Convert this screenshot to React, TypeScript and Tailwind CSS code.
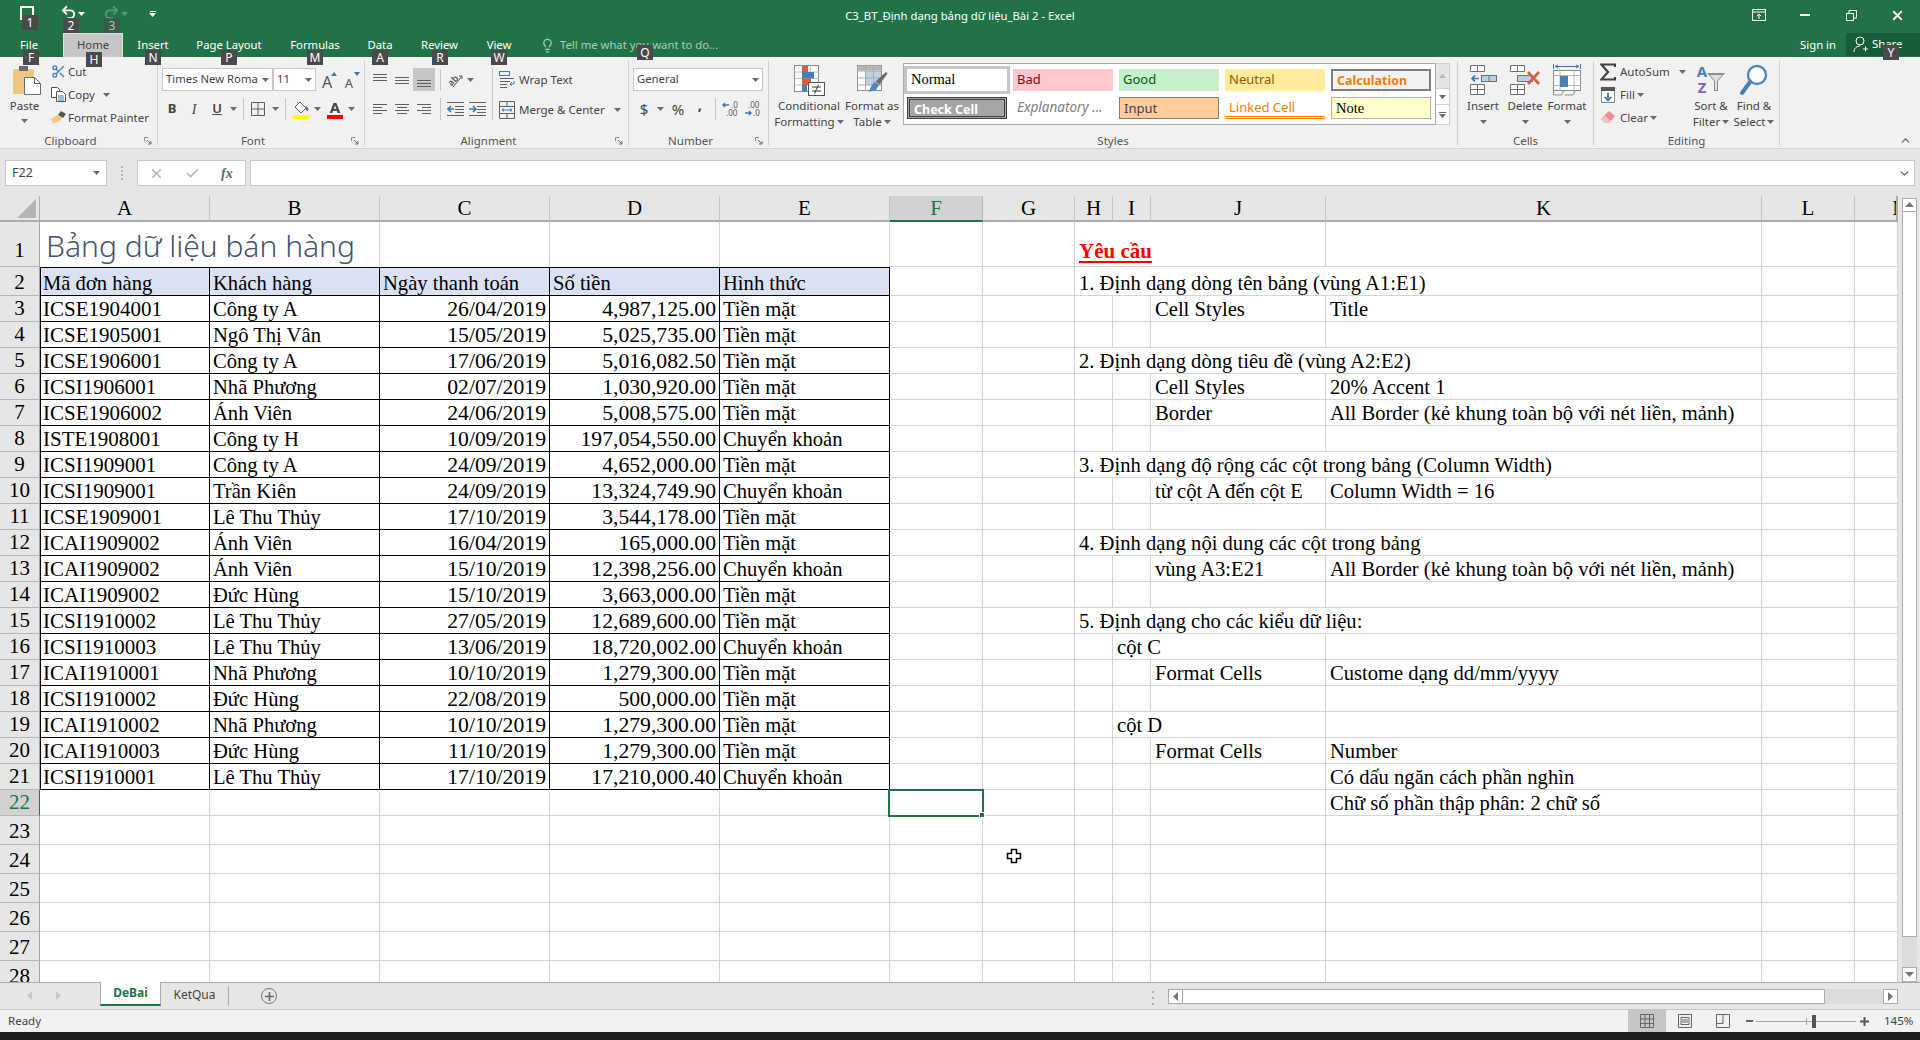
import React from "react";
import { Undo2, Redo2, Lightbulb, Scissors, ChevronUp, ChevronDown, X, Check } from "lucide-react";

const Caret = ({ c = "#6a6a6a", className = "" }: { c?: string; className?: string }) => (
  <svg width="7" height="4" viewBox="0 0 7 4" className={`shrink-0 ${className}`}><path d="M0 0h7L3.5 4z" fill={c} /></svg>
);

const Key = ({ children, className = "" }: { children: React.ReactNode; className?: string }) => (
  <div className={`absolute z-20 w-[16px] h-[15px] bg-[#4a4a4a] text-white text-[12px] leading-[15px] text-center ${className}`}>{children}</div>
);

const Launcher = () => (
  <svg width="8" height="8" viewBox="0 0 8 8" className="absolute right-[5px] top-[76px]">
    <path d="M.5 4V.5H4M.5.5V.5" stroke="#8a8a8a" fill="none" />
    <path d="M3 3l4 4M7 4v3H4" stroke="#6a6a6a" fill="none" />
  </svg>
);

function Group({ w, label, launcher, children }: { w: string; label: string; launcher?: boolean; children: React.ReactNode }) {
  return (
    <div className={`relative h-[84px] shrink-0 border-r border-[#cfcfcf] ${w}`}>
      <div className="h-[72px] flex">{children}</div>
      <div className={`h-[16px] leading-[16px] text-[11.5px] text-center text-[#555] ${launcher ? "pr-[16px]" : ""}`}>{label}</div>
      {launcher && <Launcher />}
    </div>
  );
}

const Small = ({ icon, text, caret, box = "w-[19px]", tw = "ml-0" }: { icon: React.ReactNode; text: string; caret?: React.ReactNode; box?: string; tw?: string }) => (
  <div className="h-[23px] flex items-center whitespace-nowrap text-[11.5px] text-[#444]">
    <div className={`${box} flex justify-center shrink-0`}>{icon}</div>
    <span className={tw}>{text}</span>
    {caret}
  </div>
);

const Big = ({ w, icon, l1, l2, caret2, caret1 }: { w: string; icon: React.ReactNode; l1: string; l2?: string; caret2?: boolean; caret1?: boolean }) => (
  <div className={`${w} shrink-0 flex flex-col items-center text-[11.5px] leading-[16px] text-[#444] whitespace-nowrap`}>
    <div className="h-[30px] mt-[4px] flex items-center justify-center">{icon}</div>
    <div className="mt-[3px]">{l1}</div>
    {l2 ? (
      <div className="flex items-center gap-[2px]">{l2}{caret2 && <Caret />}</div>
    ) : (
      caret1 && <div className="mt-[6px]"><Caret /></div>
    )}
  </div>
);

const Box = ({ children, w = "w-[22px]", className = "" }: { children?: React.ReactNode; w?: string; className?: string }) => (
  <div className={`${w} h-[22px] shrink-0 flex items-center justify-center ${className}`}>{children}</div>
);

const Sep = ({ className = "" }: { className?: string }) => <div className={`w-px h-[22px] bg-[#c6c6c6] shrink-0 ${className}`} />;

const HL = ({ rows }: { rows: [number, number, number][] }) => (
  <svg width="16" height="16" viewBox="0 0 16 16">
    {rows.map(([a, b, y], i) => <path key={i} d={`M${a} ${y}.5H${b}`} stroke="#5f5f5f" />)}
  </svg>
);

const Indent = ({ inc }: { inc?: boolean }) => (
  <svg width="17" height="14" viewBox="0 0 17 14">
    {[0, 13].map((y) => <path key={y} d={`M0 ${y}.5H17`} stroke="#5f5f5f" />)}
    {[4, 7, 10].map((y) => <path key={y} d={`M8 ${y}.5H17`} stroke="#5f5f5f" />)}
    <path d={inc ? "M0 7h6M4 4l3 3-3 3" : "M7 7H1M4 4L1 7l3 3"} stroke="#3f78b5" strokeWidth="1.6" fill="none" />
  </svg>
);

const PasteIcon = () => (
  <svg width="29" height="29" viewBox="0 0 29 29">
    <rect x="0" y="3" width="21" height="25" rx="1.5" fill="#edc87e" />
    <rect x="6" y="0" width="9" height="5" fill="#6b6b6b" />
    <path d="M11.5 11.5h10l6 6v11h-16z" fill="#fff" stroke="#6a6a6a" />
    <path d="M21.5 11.5v6h6" fill="none" stroke="#6a6a6a" />
  </svg>
);
const CopyIcon = () => (
  <svg width="15" height="15" viewBox="0 0 15 15" fill="#fff" stroke="#555">
    <path d="M.5.5h6l2 2v8h-8z" />
    <path d="M5.5 4.5h6l3 3v7h-9z" />
    <path d="M7 9h6M7 11h6M7 13h6" stroke="#3f78b5" />
  </svg>
);
const BrushIcon = () => (
  <svg width="17" height="15" viewBox="0 0 17 15">
    <path d="M11 1l5 3-3 4-5-3z" fill="#555" />
    <path d="M7 5l5 3-2 3-8 3 1-3-3-1z" fill="#edc87e" />
  </svg>
);
const BorderIcon = () => (
  <svg width="14" height="14" viewBox="0 0 14 14" fill="none" stroke="#5f5f5f"><path d="M.5.5h13v13H.5zM7 .5v13M.5 7h13" /></svg>
);
const FillIcon = () => (
  <svg width="17" height="19" viewBox="0 0 17 19">
    <path d="M2 7l5-5 6 6-5 5z" fill="#fff" stroke="#5f5f5f" />
    <path d="M4 2l2 2" stroke="#5f5f5f" />
    <path d="M13 6c2 1 3 3 2 5-2 0-3-2-2-5z" fill="#3f78b5" />
    <rect x="0" y="15" width="16" height="4" fill="#ffff00" />
  </svg>
);
const FontColor = () => (
  <svg width="16" height="19" viewBox="0 0 16 19">
    <text x="8" y="13" textAnchor="middle" fontSize="15" fontWeight="700" fontFamily="'Noto Sans',sans-serif" fill="#444">A</text>
    <rect x="0" y="15" width="16" height="4" fill="#ff0000" />
  </svg>
);
const GrowFont = ({ up }: { up?: boolean }) => (
  <svg width="20" height="20" viewBox="0 0 20 20">
    <text x="7" y="18" textAnchor="middle" fontSize={up ? 16 : 13} fontFamily="'Noto Sans',sans-serif" fill="#555">A</text>
    <path d={up ? "M11 6l3-4 3 4z" : "M12 2l3 4 3-4z"} fill="#3f78b5" />
  </svg>
);
const Orient = () => (
  <svg width="18" height="18" viewBox="0 0 18 18">
    <text x="3" y="14" fontSize="9" fontWeight="600" transform="rotate(-45 6 12)" fontFamily="'Noto Sans',sans-serif" fill="#555">ab</text>
    <path d="M7 16L16 5M13 5h3v3" stroke="#555" fill="none" />
  </svg>
);
const WrapIcon = () => (
  <svg width="16" height="18" viewBox="0 0 16 18" fill="none">
    <rect x="0.5" y="0.5" width="10" height="4" stroke="#3f78b5" />
    <path d="M1 7.5h14M1 10.5h10M1 13.5h7M1 16.5h7" stroke="#5f5f5f" />
    <path d="M15 10v3h-4M13 11l-2 2 2 2" stroke="#3f78b5" />
  </svg>
);
const MergeIcon = () => (
  <svg width="16" height="18" viewBox="0 0 16 18" fill="none" stroke="#5f5f5f">
    <path d="M.5.5h15v17H.5zM.5 5.5h15M.5 12.5h15M8 .5v5M8 12.5v5" />
    <path d="M3 9h10M5 7.5L3 9l2 1.5M11 7.5L13 9l-2 1.5" stroke="#3f78b5" />
  </svg>
);
const CondIcon = () => (
  <svg width="31" height="31" viewBox="0 0 31 31">
    <rect x="0.5" y="0.5" width="24" height="26" fill="#fff" stroke="#8c8c8c" />
    <path d="M8.5 .5v26M16.5 .5v26M.5 7h24M.5 13.5h24M.5 20h24" stroke="#c0c0c0" />
    <rect x="8" y="1" width="6" height="6" fill="#d9603b" />
    <rect x="8" y="7" width="12" height="6.5" fill="#4a7fb5" />
    <rect x="8" y="13.5" width="9" height="6.5" fill="#d9603b" />
    <rect x="8" y="20" width="5" height="6.5" fill="#4a7fb5" />
    <rect x="14.5" y="17.5" width="16" height="13" fill="#fff" stroke="#555" />
    <path d="M18 22h9M18 26h9M24.5 19.5l-4 9" stroke="#333" />
  </svg>
);
const TableIcon = () => (
  <svg width="31" height="31" viewBox="0 0 31 31">
    <rect x="0.5" y="0.5" width="24" height="25" fill="#fff" stroke="#8c8c8c" />
    <rect x="0.5" y="0.5" width="24" height="5" fill="#b5b5b5" />
    <rect x="8" y="6" width="16" height="14" fill="#bcd0e6" />
    <path d="M8.5 .5v25M16.5 .5v25M.5 6h24M.5 13h24M.5 20h24" stroke="#aaa" />
    <path d="M29 7l1.5 1.5-8 11-4-3z" fill="#6b6b6b" />
    <path d="M18 17l4 3-3 5-7 2c1-4 3-8 6-10z" fill="#4a87c5" />
  </svg>
);
const CellGrid = ({ x, y }: { x: number; y: number }) => (
  <g transform={`translate(${x} ${y})`} fill="#fff" stroke="#6f6f6f">
    <path d="M.5.5h14v10H.5zM7.5.5v10M.5 5.5h14" />
  </g>
);
const InsertIcon = () => (
  <svg width="27" height="30" viewBox="0 0 27 30">
    <path d="M.5.5h14v6H.5zM7.5.5v6" fill="#fff" stroke="#6f6f6f" />
    <rect x="11.5" y="10.5" width="15" height="6" fill="#b9d0e8" stroke="#6f6f6f" />
    <path d="M19 10.5v6" stroke="#6f6f6f" />
    <path d="M9 13.5H2M5 10.5l-3 3 3 3" stroke="#3f78b5" strokeWidth="1.7" fill="none" />
    <CellGrid x={0} y={19} />
  </svg>
);
const DeleteIcon = () => (
  <svg width="31" height="30" viewBox="0 0 31 30">
    <path d="M.5.5h14v6H.5zM7.5.5v6" fill="#fff" stroke="#6f6f6f" />
    <rect x="7.5" y="10.5" width="15" height="6" fill="#b9d0e8" stroke="#6f6f6f" />
    <path d="M18 7l11 12M29 7L18 19" stroke="#d9603b" strokeWidth="2.6" />
    <CellGrid x={0} y={19} />
  </svg>
);
const FormatIcon = () => (
  <svg width="29" height="32" viewBox="0 0 29 32">
    <path d="M.5 0v5M27.5 0v5" stroke="#3f78b5" />
    <path d="M2 2.5h24M5 1L2 2.5 5 4M23 1l3 1.5L23 4" stroke="#3f78b5" fill="none" />
    <rect x="0.5" y="6.5" width="27" height="20" fill="#fff" stroke="#8c8c8c" />
    <path d="M7 6.5v20M21 6.5v20M.5 11.5h27M.5 21.5h27" stroke="#b5b5b5" />
    <rect x="7" y="12" width="8" height="11" fill="#4a7fb5" />
    <path d="M.5 27v4h8l2-4M12 31h8l2-4" stroke="#8c8c8c" fill="none" />
  </svg>
);
const SigmaIcon = () => (
  <svg width="16" height="18" viewBox="0 0 16 18"><path d="M15 4V1.5H1.5L8 9l-6.5 7.5H15V14" fill="none" stroke="#444" strokeWidth="2.2" /></svg>
);
const FillDown = () => (
  <svg width="14" height="16" viewBox="0 0 14 16">
    <rect x="0.5" y="0.5" width="13" height="15" fill="#fff" stroke="#8c8c8c" />
    <rect x="0" y="0" width="14" height="4" fill="#555" />
    <path d="M7 5.5v8M3.5 10L7 13.5 10.5 10" stroke="#3f78b5" strokeWidth="1.7" fill="none" />
  </svg>
);
const Eraser = () => (
  <svg width="16" height="15" viewBox="0 0 16 15">
    <path d="M9 1l6 5-6 7H5L1 9z" fill="#ec8a96" />
    <path d="M1 9l4 4h4l2-2-6-5z" fill="#f4c0c6" />
  </svg>
);
const SortIcon = () => (
  <svg width="30" height="32" viewBox="0 0 30 32">
    <text x="6" y="13" textAnchor="middle" fontSize="15" fontWeight="700" fontFamily="'Noto Sans',sans-serif" fill="#4a7fb5">A</text>
    <text x="6" y="29" textAnchor="middle" fontSize="15" fontWeight="700" fontFamily="'Noto Sans',sans-serif" fill="#8e5ab5">Z</text>
    <path d="M11 9h18l-7 8v10h-4V17z" fill="#8c8c8c" />
    <path d="M19 17v9h2v-9l5-6H14z" fill="#e0e0e0" />
  </svg>
);
const FindIcon = () => (
  <svg width="28" height="32" viewBox="0 0 28 32" fill="none">
    <circle cx="17" cy="11" r="9" stroke="#4a87c5" strokeWidth="2.4" fill="#fff" />
    <path d="M10 18L2 29" stroke="#4a7fb5" strokeWidth="4" strokeLinecap="round" />
  </svg>
);

const Style = ({ className, children }: { className: string; children: React.ReactNode }) => (
  <div className={`h-[22px] leading-[20px] px-[4px] whitespace-nowrap overflow-hidden ${className}`}>{children}</div>
);

const DropBox = ({ w, text, children }: { w: string; text: string; children?: React.ReactNode }) => (
  <div className={`${w} h-[23px] shrink-0 bg-white border border-[#c6c6c6] flex items-center justify-between px-[3px] text-[11.3px] text-[#444] whitespace-nowrap overflow-hidden`}>
    <span>{text}</span>
    {children ?? <Caret />}
  </div>
);

const data = [
  ["ICSE1904001", "Công ty A", "26/04/2019", "4,987,125.00", "Tiền mặt"],
  ["ICSE1905001", "Ngô Thị Vân", "15/05/2019", "5,025,735.00", "Tiền mặt"],
  ["ICSE1906001", "Công ty A", "17/06/2019", "5,016,082.50", "Tiền mặt"],
  ["ICSI1906001", "Nhã Phương", "02/07/2019", "1,030,920.00", "Tiền mặt"],
  ["ICSE1906002", "Ánh Viên", "24/06/2019", "5,008,575.00", "Tiền mặt"],
  ["ISTE1908001", "Công ty H", "10/09/2019", "197,054,550.00", "Chuyển khoản"],
  ["ICSI1909001", "Công ty A", "24/09/2019", "4,652,000.00", "Tiền mặt"],
  ["ICSI1909001", "Trần Kiên", "24/09/2019", "13,324,749.90", "Chuyển khoản"],
  ["ICSE1909001", "Lê Thu Thủy", "17/10/2019", "3,544,178.00", "Tiền mặt"],
  ["ICAI1909002", "Ánh Viên", "16/04/2019", "165,000.00", "Tiền mặt"],
  ["ICAI1909002", "Ánh Viên", "15/10/2019", "12,398,256.00", "Chuyển khoản"],
  ["ICAI1909002", "Đức Hùng", "15/10/2019", "3,663,000.00", "Tiền mặt"],
  ["ICSI1910002", "Lê Thu Thủy", "27/05/2019", "12,689,600.00", "Tiền mặt"],
  ["ICSI1910003", "Lê Thu Thủy", "13/06/2019", "18,720,002.00", "Chuyển khoản"],
  ["ICAI1910001", "Nhã Phương", "10/10/2019", "1,279,300.00", "Tiền mặt"],
  ["ICSI1910002", "Đức Hùng", "22/08/2019", "500,000.00", "Tiền mặt"],
  ["ICAI1910002", "Nhã Phương", "10/10/2019", "1,279,300.00", "Tiền mặt"],
  ["ICAI1910003", "Đức Hùng", "11/10/2019", "1,279,300.00", "Tiền mặt"],
  ["ICSI1910001", "Lê Thu Thủy", "17/10/2019", "17,210,000.40", "Chuyển khoản"],
];

const panel: Record<number, { h?: string; i?: string; j?: string; k?: string }> = {
  2: { h: "1. Định dạng dòng tên bảng (vùng A1:E1)" },
  3: { j: "Cell Styles", k: "Title" },
  5: { h: "2. Định dạng dòng tiêu đề (vùng A2:E2)" },
  6: { j: "Cell Styles", k: "20% Accent 1" },
  7: { j: "Border", k: "All Border (kẻ khung toàn bộ với nét liền, mảnh)" },
  9: { h: "3. Định dạng độ rộng các cột trong bảng (Column Width)" },
  10: { j: "từ cột A đến cột E", k: "Column Width = 16" },
  12: { h: "4. Định dạng nội dung các cột trong bảng" },
  13: { j: "vùng A3:E21", k: "All Border (kẻ khung toàn bộ với nét liền, mảnh)" },
  15: { h: "5. Định dạng cho các kiểu dữ liệu:" },
  16: { i: "cột C" },
  17: { j: "Format Cells", k: "Custome dạng dd/mm/yyyy" },
  19: { i: "cột D" },
  20: { j: "Format Cells", k: "Number" },
  21: { k: "Có dấu ngăn cách phần nghìn" },
  22: { k: "Chữ số phần thập phân: 2 chữ số" },
};

const Cell = ({ className = "border-[#d4d4d4]", children }: { className?: string; children?: React.ReactNode }) => (
  <div className={`border-r border-b flex items-end px-[3px] whitespace-nowrap min-w-0 ${className}`}>{children}</div>
);

function Panel({ r }: { r: number }) {
  const p = panel[r] ?? {};
  if (r === 1)
    return (
      <>
        <Cell className="col-span-3 border-[#d4d4d4] pb-[3px] pl-[4px]">
          <span className="font-bold text-[#ff0000] text-[21px] underline decoration-2 underline-offset-[3px]">Yêu cầu</span>
        </Cell>
        <Cell /><Cell /><Cell />
      </>
    );
  if (p.h)
    return (
      <>
        <Cell className="col-span-4 border-[#d4d4d4] pl-[4px]"><span>{p.h}</span></Cell>
        <Cell /><Cell />
      </>
    );
  if (p.i)
    return (
      <>
        <Cell />
        <Cell className="col-span-2 border-[#d4d4d4] pl-[4px]"><span>{p.i}</span></Cell>
        <Cell /><Cell /><Cell />
      </>
    );
  return (
    <>
      <Cell /><Cell />
      <Cell className="border-[#d4d4d4] pl-[4px]">{p.j && <span>{p.j}</span>}</Cell>
      <Cell className="border-[#d4d4d4] pl-[4px]">{p.k && <span>{p.k}</span>}</Cell>
      <Cell /><Cell />
    </>
  );
}

function RowNum({ r }: { r: number }) {
  const sel = r === 22;
  return (
    <div className={`flex items-end justify-center text-[21px] border-b border-r ${r === 1 ? "pb-[4px]" : "pb-[1px]"} ${sel ? "bg-[#d2d2d2] border-r-[#217346] border-b-[#b5b5b5] text-[#217346]" : "bg-[#e6e6e6] border-b-[#b5b5b5] border-r-[#a5a5a5]"}`}>{r}</div>
  );
}

function Row({ r }: { r: number }) {
  const num = <RowNum r={r} />;
  const tb = "border-black";
  if (r === 1)
    return (
      <>
        {num}
        <div className="col-span-2 border-r border-[#d4d4d4] flex items-end pl-[6px] pb-[1px] whitespace-nowrap font-['Noto_Sans',sans-serif] font-light text-[30px] leading-[40px] text-[#44546a]">Bảng dữ liệu bán hàng</div>
        <div className="border-r border-[#d4d4d4]" />
        <div className="border-r border-[#d4d4d4]" />
        <div className="border-r border-[#d4d4d4]" />
        <Cell /><Cell />
        <Panel r={1} />
      </>
    );
  if (r === 2)
    return (
      <>
        {num}
        {["Mã đơn hàng", "Khách hàng", "Ngày thanh toán", "Số tiền", "Hình thức"].map((t, i) => (
          <Cell key={t} className={`border-t border-black bg-[#d9e1f2] ${i === 0 ? "border-l pl-[2px]" : ""}`}><span>{t}</span></Cell>
        ))}
        <Cell /><Cell />
        <Panel r={2} />
      </>
    );
  const row = data[r - 3];
  return (
    <>
      {num}
      {row
        ? row.map((t, i) => (
            <Cell
              key={i}
              className={`${tb} ${i === 0 ? "border-l pl-[2px] text-[21px]" : ""} ${i === 2 || i === 3 ? "justify-end text-[21.700px]" : ""}`}
            >
              <span>{t}</span>
            </Cell>
          ))
        : [0, 1, 2, 3, 4].map((i) => <Cell key={i} />)}
      {r === 22 ? (
        <Cell className="relative border-[#d4d4d4]">
          <div className="absolute -left-[2px] -top-[1px] w-[96px] h-[28px] border-2 border-[#217346] z-10">
            <div className="absolute -right-[3px] -bottom-[3px] w-[6px] h-[6px] bg-[#217346] border border-white" />
          </div>
        </Cell>
      ) : (
        <Cell />
      )}
      <Cell />
      <Panel r={r} />
    </>
  );
}

const cols = ["A", "B", "C", "D", "E", "F", "G", "H", "I", "J", "K", "L"];

export default function App() {
  const rows = Array.from({ length: 28 }, (_, i) => i + 1);
  return (
    <div className="w-[1920px] h-[1040px] overflow-hidden flex flex-col bg-[#e6e6e6] font-['Noto_Sans',sans-serif] text-[#444]">
      {/* Title bar */}
      <div className="h-[33px] shrink-0 bg-[#217346] grid grid-cols-[1fr_auto_1fr] items-center text-white">
        <div className="flex items-center h-full">
          <div className="relative ml-[20px] w-[14px] h-[14px] -mt-[8px] border-2 border-white"><Key className="left-[0px] top-[7px]">1</Key></div>
          <div className="relative ml-[26px] -mt-[8px]"><Undo2 size={17} strokeWidth={2.6} color="#fff" /><Key className="left-[3px] top-[14px]">2</Key></div>
          <Caret c="#fff" className="ml-[1px] -mt-[6px]" />
          <div className="relative ml-[18px] -mt-[8px]"><Redo2 size={17} strokeWidth={2.6} color="#5b9a78" /><Key className="left-[1px] top-[14px] opacity-60">3</Key></div>
          <Caret c="#5b9a78" className="ml-[1px] -mt-[6px]" />
          <div className="ml-[21px] -mt-[6px] flex flex-col items-center gap-[1px]"><div className="w-[6px] h-px bg-white" /><Caret c="#fff" /></div>
        </div>
        <div className="text-[11.3px]">C3_BT_Định dạng bảng dữ liệu_Bài 2 - Excel</div>
        <div className="flex justify-end items-center h-full">
          <div className="w-[46px] flex justify-center -mt-[3px]">
            <svg width="14" height="12" viewBox="0 0 14 12" fill="none" stroke="#fff"><path d="M.5.5h13v11H.5zM.5 3h13M7 10V5M5 7l2-2 2 2" /></svg>
          </div>
          <div className="w-[46px] flex justify-center -mt-[3px]"><div className="w-[10px] h-[2px] bg-white" /></div>
          <div className="w-[46px] flex justify-center -mt-[3px]">
            <svg width="11" height="11" viewBox="0 0 11 11" fill="none" stroke="#fff"><path d="M.5 3.5h7v7h-7zM3 3V.5h7.5V8H8" /></svg>
          </div>
          <div className="w-[46px] flex justify-center -mt-[3px]"><X size={15} strokeWidth={3} color="#fff" /></div>
        </div>
      </div>

      {/* Tabs */}
      <div className="h-[24px] shrink-0 bg-[#217346] flex items-center text-[11.3px] text-white relative">
        <div className="relative w-[58px] text-center mr-[5px]">File<Key className="left-[23px] top-[13px]">F</Key></div>
        <div className="relative w-[60px] h-full text-center leading-[22px] bg-[#c6c6c6] text-[#444] border-x border-t border-[#e0e0e0]">Home<Key className="left-[22px] top-[18px]">H</Key></div>
        <div className="relative w-[60px] text-center">Insert<Key className="left-[22px] top-[13px]">N</Key></div>
        <div className="relative w-[92px] text-center">Page Layout<Key className="left-[38px] top-[13px]">P</Key></div>
        <div className="relative w-[80px] text-center">Formulas<Key className="left-[32px] top-[13px]">M</Key></div>
        <div className="relative w-[50px] text-center">Data<Key className="left-[17px] top-[13px]">A</Key></div>
        <div className="relative w-[69px] text-center">Review<Key className="left-[27px] top-[13px]">R</Key></div>
        <div className="relative w-[50px] text-center">View<Key className="left-[17px] top-[13px]">W</Key></div>
        <div className="relative ml-[16px] flex items-center gap-[5px] text-[#a8cdb8]">
          <Lightbulb size={15} color="#a8cdb8" />
          <span>Tell me what you want to do...</span>
          <Key className="left-[97px] top-[8px]">Q</Key>
        </div>
        <div className="ml-auto mr-[10px]">Sign in</div>
        <div className="relative w-[74px] h-[23px] self-start bg-[#185c37] flex items-center pl-[7px] gap-[4px]">
          <svg width="15" height="17" viewBox="0 0 15 17" fill="none" stroke="#fff"><circle cx="7" cy="5" r="4" /><path d="M1 16c0-4 3-6 6-6M10 13h5M12.5 10.500v5" /></svg>
          <span>Share</span>
          <Key className="left-[37px] top-[12px]">Y</Key>
        </div>
      </div>

      {/* Ribbon */}
      <div className="relative h-[92px] shrink-0 bg-[#f1f1f1] border-b border-[#d2d2d2] pt-[4px] flex items-start">
        <Group w="w-[158px]" label="Clipboard" launcher>
          <div className="w-[49px] flex flex-col items-center text-[11.5px] leading-[16px]">
            <div className="mt-[5px] ml-[5px]"><PasteIcon /></div>
            <div className="mt-[3px]">Paste</div>
            <Caret className="mt-[5px]" />
          </div>
          <div className="flex flex-col -mt-[1px]">
            <Small icon={<Scissors size={15} color="#3f78b5" />} text="Cut" />
            <Small icon={<CopyIcon />} text="Copy" caret={<Caret className="ml-[8px]" />} />
            <Small icon={<BrushIcon />} text="Format Painter" />
          </div>
        </Group>

        <Group w="w-[207px]" label="Font" launcher>
          <div className="flex flex-col">
            <div className="flex items-center mt-[7px] ml-[4px]">
              <DropBox w="w-[111px]" text="Times New Roma" />
              <DropBox w="w-[43px]" text="11" />
              <Box className="ml-[3px]"><GrowFont up /></Box>
              <Box><GrowFont /></Box>
            </div>
            <div className="flex items-center mt-[7px] ml-[3px]">
              <Box className="font-bold text-[13px]">B</Box>
              <Box className="italic font-['Liberation_Serif',serif] text-[14px]">I</Box>
              <Box className="ml-[1px] underline text-[13px] font-semibold">U</Box>
              <Box w="w-[10px]"><Caret /></Box>
              <Sep className="ml-[5px]" />
              <Box w="w-[18px]" className="ml-[5px]"><BorderIcon /></Box>
              <Box w="w-[10px]" className="ml-[3px]"><Caret /></Box>
              <Sep className="ml-[5px]" />
              <Box w="w-[20px]" className="ml-[5px]"><FillIcon /></Box>
              <Box w="w-[10px]" className="ml-[1px]"><Caret /></Box>
              <Box w="w-[20px]" className="ml-[3px]"><FontColor /></Box>
              <Box w="w-[10px]" className="ml-[1px]"><Caret /></Box>
            </div>
          </div>
        </Group>

        <Group w="w-[264px]" label="Alignment" launcher>
          <div className="w-[127px] flex flex-col">
            <div className="flex items-center mt-[7px] ml-[4px]">
              <Box><HL rows={[[1, 15, 2], [1, 15, 5], [1, 15, 8]]} /></Box>
              <Box><HL rows={[[1, 15, 5], [1, 15, 8], [1, 15, 11]]} /></Box>
              <Box className="h-[23px] bg-[#c6c6c6]"><HL rows={[[1, 15, 8], [1, 15, 11], [1, 15, 14]]} /></Box>
              <Sep className="ml-[5px]" />
              <Box className="ml-[3px]"><Orient /></Box>
              <Box w="w-[8px]"><Caret /></Box>
            </div>
            <div className="flex items-center mt-[7px] ml-[4px]">
              <Box><HL rows={[[1, 15, 3], [1, 10, 6], [1, 15, 9], [1, 10, 12]]} /></Box>
              <Box><HL rows={[[1, 15, 3], [3, 13, 6], [1, 15, 9], [3, 13, 12]]} /></Box>
              <Box><HL rows={[[1, 15, 3], [6, 15, 6], [1, 15, 9], [6, 15, 12]]} /></Box>
              <Sep className="ml-[5px]" />
              <Box className="ml-[3px]"><Indent /></Box>
              <Box><Indent inc /></Box>
            </div>
          </div>
          <div className="w-px h-[52px] mt-[7px] bg-[#c6c6c6]" />
          <div className="flex flex-col ml-[3px] mt-[7px] gap-[7px]">
            <Small icon={<WrapIcon />} text="Wrap Text" box="w-[22px]" tw="ml-[1px]" />
            <Small icon={<MergeIcon />} text="Merge & Center" box="w-[22px]" tw="ml-[1px]" caret={<Caret className="ml-[9px]" />} />
          </div>
        </Group>

        <Group w="w-[140px]" label="Number" launcher>
          <div className="flex flex-col">
            <div className="mt-[7px] ml-[4px]"><DropBox w="w-[130px]" text="General" /></div>
            <div className="flex items-center mt-[7px] ml-[5px] text-[15px]">
              <Box w="w-[20px]">$</Box>
              <Box w="w-[10px]" className="ml-[1px]"><Caret /></Box>
              <Box w="w-[20px]" className="ml-[3px]">%</Box>
              <Box w="w-[20px]" className="ml-[2px] font-bold pb-[10px]">,</Box>
              <Sep className="ml-[5px]" />
              <Box w="w-[20px]" className="ml-[4px]">
                <svg width="17" height="16" viewBox="0 0 17 16" fill="none">
                  <path d="M7 4H1M3 2L1 4l2 2" stroke="#3f78b5" strokeWidth="1.4" />
                  <text x="9" y="7" fontSize="8" fill="#555" fontFamily="'Noto Sans',sans-serif">.0</text>
                  <text x="4" y="15" fontSize="8" fill="#555" fontFamily="'Noto Sans',sans-serif">.00</text>
                </svg>
              </Box>
              <Box w="w-[20px]" className="ml-[2px]">
                <svg width="17" height="16" viewBox="0 0 17 16" fill="none">
                  <text x="4" y="7" fontSize="8" fill="#555" fontFamily="'Noto Sans',sans-serif">.00</text>
                  <path d="M1 12h6M5 10l2 2-2 2" stroke="#3f78b5" strokeWidth="1.4" />
                  <text x="9" y="15" fontSize="8" fill="#555" fontFamily="'Noto Sans',sans-serif">.0</text>
                </svg>
              </Box>
            </div>
          </div>
        </Group>

        <Group w="w-[689px]" label="Styles">
          <Big w="w-[64px] ml-[8px]" icon={<CondIcon />} l1="Conditional" l2="Formatting" caret2 />
          <Big w="w-[62px]" icon={<TableIcon />} l1="Format as" l2="Table" caret2 />
          <div className="mt-[2px] flex">
            <div className="w-[533px] h-[62px] bg-white border border-[#ababab] grid grid-cols-[repeat(5,100px)] grid-rows-[22px_22px] gap-x-[6px] gap-y-[6px] pl-[3px] pt-[5px]">
              <Style className="font-['Liberation_Serif',serif] text-[14.500px] text-black bg-white outline-[3px] outline-[#c6c6c6]">Normal</Style>
              <Style className="text-[13px] bg-[#ffc7ce] text-[#9c0006]">Bad</Style>
              <Style className="text-[13px] bg-[#c6efce] text-[#006100]">Good</Style>
              <Style className="text-[13px] bg-[#ffeb9c] text-[#9c5700]">Neutral</Style>
              <Style className="text-[12.500px] bg-[#f2f2f2] text-[#fa7d00] font-bold border-2 border-[#7f7f7f] leading-[16px] px-[2px]">Calculation</Style>
              <Style className="text-[12.500px] bg-[#a5a5a5] text-white font-bold border-[3px] border-double border-[#3f3f3f] leading-[14px] px-[1px]">Check Cell</Style>
              <Style className="text-[13.500px] italic text-[#7f7f7f]">Explanatory ...</Style>
              <Style className="text-[13px] bg-[#ffcc99] text-[#3f3f76] border border-[#7f7f7f] leading-[19px] px-[3px]">Input</Style>
              <Style className="text-[13px] text-[#fa7d00] border-b-[3px] border-double border-[#fa7d00] leading-[19px]">Linked Cell</Style>
              <Style className="font-['Liberation_Serif',serif] text-[14.500px] text-black bg-[#ffffcc] border border-[#b2b2b2] px-[3px] leading-[19px]">Note</Style>
            </div>
            <div className="w-[14px] h-[62px] flex flex-col">
              <div className="h-[26px] bg-[#e4e4e4] border-y border-r border-[#d0d0d0] flex items-center justify-center"><svg width="7" height="4" viewBox="0 0 7 4"><path d="M0 4h7L3.500 0z" fill="#b5b5b5" /></svg></div>
              <div className="h-[15px] bg-white border-r border-[#d0d0d0] flex items-center justify-center"><Caret /></div>
              <div className="h-[21px] bg-white border-y border-r border-[#d0d0d0] flex flex-col items-center justify-center gap-[1px]"><div className="w-[7px] h-px bg-[#6a6a6a]" /><Caret /></div>
            </div>
          </div>
        </Group>

        <Group w="w-[136px]" label="Cells">
          <Big w="w-[42px] ml-[4px]" icon={<InsertIcon />} l1="Insert" caret1 />
          <Big w="w-[42px]" icon={<DeleteIcon />} l1="Delete" caret1 />
          <Big w="w-[42px]" icon={<FormatIcon />} l1="Format" caret1 />
        </Group>

        <Group w="w-[186px]" label="Editing">
          <div className="w-[89px] ml-[6px] shrink-0 flex flex-col -mt-[1px]">
            <Small box="w-[16px]" tw="ml-[4px]" icon={<SigmaIcon />} text="AutoSum" caret={<Caret className="ml-[9px]" />} />
            <Small box="w-[16px]" tw="ml-[4px]" icon={<FillDown />} text="Fill" caret={<Caret className="ml-[2px]" />} />
            <Small box="w-[16px]" tw="ml-[4px]" icon={<Eraser />} text="Clear" caret={<Caret className="ml-[2px]" />} />
          </div>
          <Big w="w-[44px]" icon={<SortIcon />} l1="Sort &" l2="Filter" caret2 />
          <Big w="w-[42px]" icon={<FindIcon />} l1="Find &" l2="Select" caret2 />
        </Group>

        <ChevronUp size={13} color="#666" strokeWidth={2.5} className="absolute right-[8px] top-[77px]" />
      </div>

      {/* Formula bar */}
      <div className="h-[47px] shrink-0 bg-[#e6e6e6] pt-[11px] flex items-start">
        <div className="ml-[5px] w-[102px] h-[26px] bg-white border border-[#c6c6c6] flex items-center justify-between pl-[6px] pr-[6px] text-[12.5px] text-[#444]">
          <span>F22</span><Caret />
        </div>
        <div className="ml-[14px] w-[2px] h-[14px] mt-[6px] border-l-2 border-dotted border-[#b5b5b5]" />
        <div className="ml-[14px] w-[109px] h-[26px] bg-white border border-[#c6c6c6] flex items-center">
          <X size={15} color="#b5b5b5" strokeWidth={2.5} className="ml-[11px]" />
          <Check size={15} color="#b5b5b5" strokeWidth={2.5} className="ml-[21px]" />
          <span className="ml-[21px] italic font-bold font-['Liberation_Serif',serif] text-[14px] text-[#666]">fx</span>
        </div>
        <div className="ml-[4px] w-[1665px] h-[26px] bg-white border border-[#c6c6c6] flex items-center justify-end pr-[3px]">
          <ChevronDown size={13} color="#666" strokeWidth={2.5} />
        </div>
      </div>

      {/* Sheet */}
      <div className="relative h-[786px] shrink-0 flex">
        <div className="w-[1898px] h-[786px] overflow-hidden bg-white">
          <div className="grid grid-cols-[40px_repeat(5,170px)_93px_92px_38px_38px_175px_436px_93px_43px] grid-rows-[26px_45px_29px_repeat(20,26px)_repeat(6,29px)] font-['Liberation_Serif',serif] text-[20.600px] leading-[24px] text-black">
            <div className="bg-[#e6e6e6] border-b-2 border-r border-[#ababab] flex items-end justify-end pr-[3px] pb-[2px]">
              <svg width="19" height="19" viewBox="0 0 19 19"><path d="M19 0v19H0z" fill="#b5b5b5" /></svg>
            </div>
            {cols.map((c) => (
              <div key={c} className={`text-[21px] border-b-2 border-r flex items-end justify-center ${c === "F" ? "bg-[#d2d2d2] text-[#217346] border-b-[#217346] border-r-[#b5b5b5]" : "bg-[#e6e6e6] border-b-[#ababab] border-r-[#c4c4c4]"}`}>{c}</div>
            ))}
            <div className="text-[21px] bg-[#e6e6e6] border-b-2 border-r-2 border-[#ababab] overflow-hidden flex items-end"><div className="w-[93px] shrink-0 text-center">M</div></div>
            {rows.map((r) => <Row key={r} r={r} />)}
          </div>
        </div>
        {/* Vertical scrollbar */}
        <div className="w-[22px] pl-[4px] pt-[2px] flex flex-col">
          <div className="w-[15px] h-[14px] bg-white border border-[#ababab] flex items-center justify-center"><svg width="9" height="5" viewBox="0 0 9 5"><path d="M0 5h9L4.500 0z" fill="#777" /></svg></div>
          <div className="w-[15px] h-[727px] bg-white border-x border-b border-[#ababab]" />
          <div className="w-[15px] h-[30px] bg-[#dcdcdc]" />
          <div className="w-[15px] h-[15px] bg-white border border-[#ababab] flex items-center justify-center"><svg width="9" height="5" viewBox="0 0 9 5"><path d="M0 0h9L4.500 5z" fill="#777" /></svg></div>
        </div>
        {/* mouse cursor */}
        <svg width="16" height="16" viewBox="0 0 16 16" className="absolute left-[1006px] top-[652px] z-20">
          <path d="M5.500 1.500h5v4h4v5h-4v4h-5v-4h-4v-5h4z" fill="#fff" stroke="#000" strokeWidth="1.500" />
        </svg>
      </div>

      {/* Sheet tabs */}
      <div className="h-[28px] shrink-0 bg-[#e6e6e6] border-t border-[#ababab] border-b border-b-[#c6c6c6] flex items-start">
        <div className="w-[100px] h-[24px] flex items-center">
          <svg width="5" height="9" viewBox="0 0 5 9" className="ml-[27px]"><path d="M5 0v9L0 4.500z" fill="#c6c6c6" /></svg>
          <svg width="5" height="9" viewBox="0 0 5 9" className="ml-[24px]"><path d="M0 0v9l5-4.500z" fill="#c6c6c6" /></svg>
        </div>
        <div className="w-[61px] h-[24px] bg-white border-x border-[#ababab] border-b-2 border-b-[#217346] -mt-px text-center text-[12px] font-bold leading-[22px] text-[#217346]">DeBai</div>
        <div className="w-[68px] h-[20px] mt-[3px] border-r border-[#ababab] text-center text-[12px] leading-[18px]">KetQua</div>
        <div className="ml-[32px] mt-[5px] w-[16px] h-[16px] rounded-full border border-[#777] flex items-center justify-center">
          <svg width="9" height="9" viewBox="0 0 9 9"><path d="M4.500 0v9M0 4.500h9" stroke="#666" strokeWidth="1.600" /></svg>
        </div>
        <div className="ml-[875px] mt-[8px] flex flex-col gap-[4px]">
          <div className="w-[2px] h-[2px] bg-[#aaa]" /><div className="w-[2px] h-[2px] bg-[#aaa]" /><div className="w-[2px] h-[2px] bg-[#aaa]" />
        </div>
        <div className="ml-[14px] mt-[6px] flex h-[15px]">
          <div className="w-[15px] h-[15px] bg-white border border-[#ababab] flex items-center justify-center"><svg width="5" height="9" viewBox="0 0 5 9"><path d="M5 0v9L0 4.500z" fill="#777" /></svg></div>
          <div className="w-[642px] h-[15px] bg-white border-y border-r border-[#ababab]" />
          <div className="w-[58px] h-[15px] bg-[#dcdcdc]" />
          <div className="w-[15px] h-[15px] bg-white border border-[#ababab] flex items-center justify-center"><svg width="5" height="9" viewBox="0 0 5 9"><path d="M0 0v9l5-4.500z" fill="#777" /></svg></div>
        </div>
      </div>

      {/* Status bar */}
      <div className="h-[22px] shrink-0 bg-[#f1f1f1] flex items-center text-[11.500px] text-[#444]">
        <span className="ml-[8px]">Ready</span>
        <div className="ml-auto w-[38px] h-full bg-[#c6c6c6] flex items-center justify-center">
          <svg width="14" height="14" viewBox="0 0 14 14" fill="none" stroke="#666"><path d="M.5.5h13v13H.5zM5 .5v13M9.500 .5v13M.5 5h13M.5 9.500h13" /></svg>
        </div>
        <div className="w-[38px] flex justify-center">
          <svg width="14" height="14" viewBox="0 0 14 14" fill="none" stroke="#666"><path d="M.5.5h13v13H.5zM3 3.500h8v7H3zM4 6h6M4 8h6" /></svg>
        </div>
        <div className="w-[38px] flex justify-center">
          <svg width="14" height="14" viewBox="0 0 14 14" fill="none" stroke="#666"><path d="M.5.5h13v13H.5zM.5 9.500h6.500V.5" /></svg>
        </div>
        <div className="w-[7px] h-[2px] bg-[#666] ml-[4px]" />
        <div className="relative ml-[3px] w-[100px] h-px bg-[#a5a5a5]">
          <div className="absolute left-[50px] -top-[3px] w-px h-[7px] bg-[#a5a5a5]" />
          <div className="absolute left-[56px] -top-[6px] w-[4px] h-[13px] bg-[#555]" />
        </div>
        <svg width="9" height="9" viewBox="0 0 9 9" className="ml-[4px]"><path d="M4.500 0v9M0 4.500h9" stroke="#555" strokeWidth="2" /></svg>
        <span className="ml-[15px] mr-[9px] w-[27px]">145%</span>
      </div>

      <div className="flex-1 bg-[#1f1f1f]" />
    </div>
  );
}
